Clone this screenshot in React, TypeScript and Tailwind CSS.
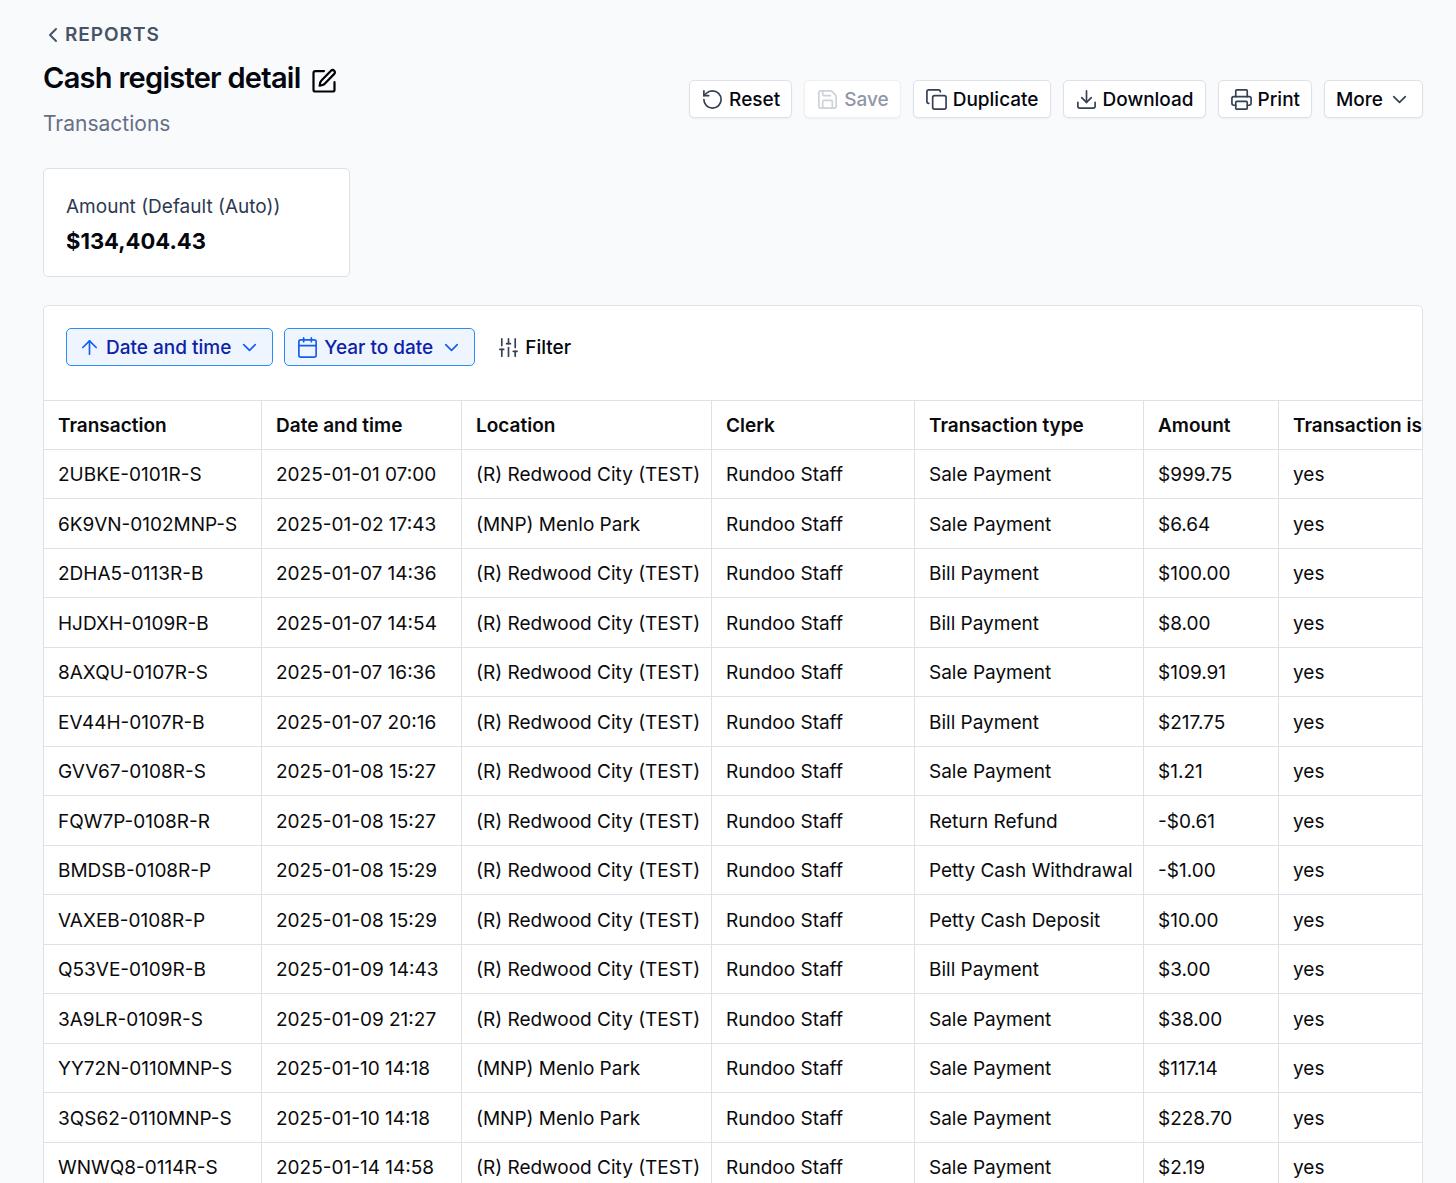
import { ButtonHTMLAttributes, FC, ReactNode } from "react";
import {
  ArrowUp,
  Calendar,
  ChevronDown,
  ChevronLeft,
  Copy,
  Download,
  LucideIcon,
  Printer,
  RotateCcw,
  Save,
  SlidersVertical,
} from "lucide-react";

interface ToolbarButtonProps extends ButtonHTMLAttributes<HTMLButtonElement> {
  icon?: LucideIcon;
  children: ReactNode;
}

interface FilterChipProps {
  icon: LucideIcon;
  children: ReactNode;
}

interface Transaction {
  id: string;
  date: string;
  location: string;
  type: string;
  amount: string;
}

const REDWOOD = "(R) Redwood City (TEST)";
const MENLO = "(MNP) Menlo Park";

const transactions: Transaction[] = [
  { id: "2UBKE-0101R-S", date: "2025-01-01 07:00", location: REDWOOD, type: "Sale Payment", amount: "$999.75" },
  { id: "6K9VN-0102MNP-S", date: "2025-01-02 17:43", location: MENLO, type: "Sale Payment", amount: "$6.64" },
  { id: "2DHA5-0113R-B", date: "2025-01-07 14:36", location: REDWOOD, type: "Bill Payment", amount: "$100.00" },
  { id: "HJDXH-0109R-B", date: "2025-01-07 14:54", location: REDWOOD, type: "Bill Payment", amount: "$8.00" },
  { id: "8AXQU-0107R-S", date: "2025-01-07 16:36", location: REDWOOD, type: "Sale Payment", amount: "$109.91" },
  { id: "EV44H-0107R-B", date: "2025-01-07 20:16", location: REDWOOD, type: "Bill Payment", amount: "$217.75" },
  { id: "GVV67-0108R-S", date: "2025-01-08 15:27", location: REDWOOD, type: "Sale Payment", amount: "$1.21" },
  { id: "FQW7P-0108R-R", date: "2025-01-08 15:27", location: REDWOOD, type: "Return Refund", amount: "-$0.61" },
  { id: "BMDSB-0108R-P", date: "2025-01-08 15:29", location: REDWOOD, type: "Petty Cash Withdrawal", amount: "-$1.00" },
  { id: "VAXEB-0108R-P", date: "2025-01-08 15:29", location: REDWOOD, type: "Petty Cash Deposit", amount: "$10.00" },
  { id: "Q53VE-0109R-B", date: "2025-01-09 14:43", location: REDWOOD, type: "Bill Payment", amount: "$3.00" },
  { id: "3A9LR-0109R-S", date: "2025-01-09 21:27", location: REDWOOD, type: "Sale Payment", amount: "$38.00" },
  { id: "YY72N-0110MNP-S", date: "2025-01-10 14:18", location: MENLO, type: "Sale Payment", amount: "$117.14" },
  { id: "3QS62-0110MNP-S", date: "2025-01-10 14:18", location: MENLO, type: "Sale Payment", amount: "$228.70" },
  { id: "WNWQ8-0114R-S", date: "2025-01-14 14:58", location: REDWOOD, type: "Sale Payment", amount: "$2.19" },
];

const columns = [
  { label: "Transaction", width: "w-[218px]" },
  { label: "Date and time", width: "w-[200px]" },
  { label: "Location", width: "w-[250px]" },
  { label: "Clerk", width: "w-[203px]" },
  { label: "Transaction type", width: "w-[229px]" },
  { label: "Amount", width: "w-[135px]" },
  { label: "Transaction is", width: "w-[220px]" },
];

const ToolbarButton: FC<ToolbarButtonProps> = ({ icon: Icon, children, ...props }) => (
  <button
    type="button"
    className="group flex h-[38px] items-center gap-[5px] rounded-[5px] border border-[#dfe1e8] bg-white px-[11px] font-medium text-[#05070f] shadow-xs disabled:border-[#eff0f4] disabled:text-[#8f97a8]"
    {...props}
  >
    {Icon && (
      <Icon
        className="size-[23px] text-[#344054] group-disabled:text-[#cdd1da]"
        strokeWidth={1.75}
      />
    )}
    <span className="pt-0.5">{children}</span>
    {!Icon && (
      <ChevronDown className="size-[23px] text-[#344054]" strokeWidth={1.75} />
    )}
  </button>
);

const FilterChip: FC<FilterChipProps> = ({ icon: Icon, children }) => (
  <button
    type="button"
    className="flex h-[38px] items-center gap-[5px] rounded-[5px] border border-[#2b8cf5] bg-[#eff5ff] px-[11px] font-medium text-[#0c22a8]"
  >
    <Icon className="size-[23px] text-[#155eef]" strokeWidth={1.75} />
    <span className="pt-0.5">{children}</span>
    <ChevronDown className="ml-0.5 size-[23px] text-[#155eef]" strokeWidth={1.75} />
  </button>
);

const EditIcon: FC = () => (
  <svg
    viewBox="0 0 24 24"
    className="size-7"
    fill="none"
    stroke="currentColor"
    strokeWidth="1.9"
    strokeLinecap="round"
    strokeLinejoin="round"
    aria-hidden="true"
  >
    <path d="M12 3.5H4.6A1.6 1.6 0 0 0 3 5.1v14.3A1.6 1.6 0 0 0 4.6 21h14.8a1.6 1.6 0 0 0 1.6-1.6V13" />
    <path d="M18 3.2a1.9 1.9 0 0 1 2.8 2.7l-8.2 8.5a3.5 3.5 0 0 1-1.7 1L8.3 16l.5-2.7a3.5 3.5 0 0 1 1-1.7Z" />
  </svg>
);

const PageHeader: FC = () => (
  <header className="flex items-start justify-between">
    <div>
      <a
        href="#reports"
        className="-ml-0.5 flex items-center text-[19px] leading-6 font-semibold tracking-wider text-[#475467]"
      >
        <ChevronLeft className="size-6" />
        REPORTS
      </a>
      <div className="mt-[11px] flex items-center gap-[9px]">
        <h1 className="text-[29px] leading-10 font-semibold tracking-tight text-[#05070f]">
          Cash register detail
        </h1>
        <button type="button" aria-label="Rename report" className="pt-1.5">
          <EditIcon />
        </button>
      </div>
      <p className="mt-3 text-[21px] leading-7 text-[#667085]">Transactions</p>
    </div>
    <div className="mt-[57px] flex gap-3">
      <ToolbarButton icon={RotateCcw}>Reset</ToolbarButton>
      <ToolbarButton icon={Save} disabled>
        Save
      </ToolbarButton>
      <ToolbarButton icon={Copy}>Duplicate</ToolbarButton>
      <ToolbarButton icon={Download}>Download</ToolbarButton>
      <ToolbarButton icon={Printer}>Print</ToolbarButton>
      <ToolbarButton>More</ToolbarButton>
    </div>
  </header>
);

const AmountCard: FC = () => (
  <section className="mt-[30px] w-[307px] rounded-[5px] border border-[#dfe1e8] bg-white px-[22px] pt-6 pb-[19px]">
    <h2 className="leading-7 text-[#2b3950]">Amount (Default (Auto))</h2>
    <p className="mt-1 text-[22px] leading-8 font-bold text-[#05070f]">
      $134,404.43
    </p>
  </section>
);

const TransactionTable: FC = () => (
  <div className="overflow-hidden">
    <table className="w-full min-w-[1455px] table-fixed border-separate border-spacing-0 text-left text-[#0a0a0c]">
      <thead>
        <tr className="h-[50px]">
          {columns.map((column) => (
            <th
              key={column.label}
              scope="col"
              className={`${column.width} border-y border-r border-[#dfe1e8] px-3.5 pt-[3px] font-semibold whitespace-nowrap`}
            >
              {column.label}
            </th>
          ))}
        </tr>
      </thead>
      <tbody className="[&_td]:border-r [&_td]:border-b [&_td]:border-[#dfe1e8] [&_td]:px-3.5 [&_td]:pt-[3px] [&_td]:whitespace-nowrap">
        {transactions.map((row) => (
          <tr key={row.id} className="h-[49px] even:h-[50px]">
            <td>{row.id}</td>
            <td>{row.date}</td>
            <td>{row.location}</td>
            <td>Rundoo Staff</td>
            <td>{row.type}</td>
            <td>{row.amount}</td>
            <td>yes</td>
          </tr>
        ))}
      </tbody>
    </table>
  </div>
);

const App: FC = () => {
  return (
    <main className="h-screen overflow-hidden bg-[#f9fafc] pt-[23px] pr-[33px] pl-[43px] font-['Inter',sans-serif] text-[19px]">
      <PageHeader />
      <AmountCard />
      <section className="mt-7 overflow-hidden rounded-[5px] border border-[#dfe1e8] bg-white">
        <div className="flex gap-[11px] px-[22px] pt-[22px] pb-[34px]">
          <FilterChip icon={ArrowUp}>Date and time</FilterChip>
          <FilterChip icon={Calendar}>Year to date</FilterChip>
          <button
            type="button"
            className="flex items-center gap-[5px] px-[11px] font-medium text-[#05070f]"
          >
            <SlidersVertical className="size-[23px] text-[#344054]" strokeWidth={1.75} />
            <span className="pt-0.5">Filter</span>
          </button>
        </div>
        <TransactionTable />
      </section>
    </main>
  );
};

export default App;
